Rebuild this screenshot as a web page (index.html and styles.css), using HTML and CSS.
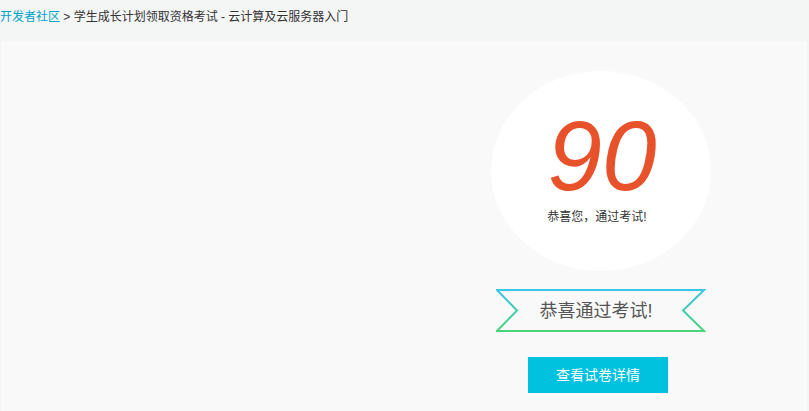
FILE: index.html
```html
<!DOCTYPE html>
<html lang="zh-CN">
<head>
<meta charset="utf-8">
<title>考试结果</title>
<link rel="stylesheet" href="styles.css">
</head>
<body>
<div class="crumbs"><a class="crumb-link" href="#">开发者社区</a> &gt; 学生成长计划领取资格考试 - 云计算及云服务器入门</div>
<main class="panel">
  <section class="result">
    <div class="score-circle">
      <div class="score">90</div>
      <div class="score-note">恭喜您，通过考试!</div>
    </div>
    <div class="ribbon">
      <svg class="ribbon-shape" width="210" height="43" viewBox="0 0 210 43">
        <defs>
          <linearGradient id="rg" x1="0" y1="0" x2="0" y2="1">
            <stop offset="0" stop-color="#3ac6e6"/>
            <stop offset="1" stop-color="#4cd37a"/>
          </linearGradient>
        </defs>
        <polygon points="1,1 208,1 187,21.5 208,42 1,42 21,21.5" fill="none" stroke="url(#rg)" stroke-width="2"/>
      </svg>
      <span class="ribbon-text">恭喜通过考试!</span>
    </div>
    <a class="detail-btn" href="#">查看试卷详情</a>
  </section>
</main>
</body>
</html>
```
FILE: styles.css
```css
html, body {
  margin: 0;
  padding: 0;
  height: 100%;
}
body {
  background: #f4f5f5;
  font-family: "Liberation Sans", "Noto Sans CJK SC", sans-serif;
  color: #333;
  display: flex;
  flex-direction: column;
  overflow: hidden;
}
.crumbs {
  height: 41px;
  box-sizing: border-box;
  padding-top: 10px;
  font-size: 12px;
  line-height: 14px;
  color: #333;
}
.crumb-link {
  color: #00a2ca;
  text-decoration: none;
}
.panel {
  flex: 1;
  margin: 0 2px 0 1px;
  background: #f9f9f9;
}
.result {
  width: 220px;
  margin-left: 490px;
  padding-top: 30px;
  display: flex;
  flex-direction: column;
  align-items: center;
}
.score-circle {
  width: 220px;
  height: 200px;
  border-radius: 50%;
  background: #fff;
  display: flex;
  flex-direction: column;
  align-items: center;
  box-sizing: border-box;
  padding-top: 45px;
}
.score {
  font-family: "Liberation Sans", sans-serif;
  font-style: italic;
  font-size: 98px;
  line-height: 80px;
  height: 80px;
  color: #e8522b;
  margin-left: 2px;
}
.score-note {
  margin-top: 14px;
  margin-right: 8px;
  font-size: 12px;
  line-height: 14px;
  color: #333;
}
.ribbon {
  position: relative;
  margin-top: 18px;
  width: 210px;
  height: 43px;
  display: flex;
  align-items: center;
  justify-content: center;
}
.ribbon-shape {
  position: absolute;
  left: 0;
  top: 0;
}
.ribbon-text {
  position: relative;
  margin-right: 10px;
  font-size: 18px;
  line-height: 20px;
  color: #555;
}
.detail-btn {
  margin-top: 25px;
  margin-right: 6px;
  width: 140px;
  height: 36px;
  background: #00c1de;
  color: #fff;
  font-size: 14px;
  line-height: 36px;
  text-align: center;
  text-decoration: none;
}
```
